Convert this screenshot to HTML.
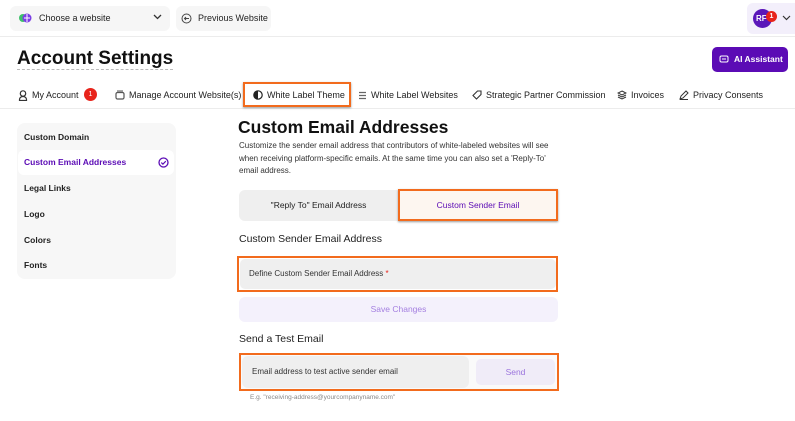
<!DOCTYPE html>
<html><head><style>
*{box-sizing:border-box;margin:0;padding:0}
body{width:795px;height:421px;background:#fff;font-family:"Liberation Sans",sans-serif;color:#111;position:relative;overflow:hidden}
.a{position:absolute}
.tab{position:absolute;top:89px;height:12px;line-height:12px;font-size:9px;color:#222;white-space:nowrap;display:flex;align-items:center;gap:4px}
.tab svg{flex:none}
.side{position:absolute;left:24px;font-size:8.5px;font-weight:bold;color:#222}
</style></head><body>
<div class="a" style="left:0;top:36px;width:795px;height:1px;background:#ececec"></div>
<div class="a" style="left:10px;top:6px;width:160px;height:25px;background:#f6f6f6;border-radius:6px"></div>
<svg class="a" style="left:18px;top:12px" width="14" height="12"><circle cx="5" cy="6" r="4" fill="#3ec16a"/><circle cx="9" cy="6" r="4.5" fill="#7b3fe4"/><path d="M6 6h6M9 2v8" stroke="#fff" stroke-width="1"/></svg>
<div class="a" style="left:39px;top:13px;font-size:9px;color:#222">Choose a website</div>
<svg class="a" style="left:153px;top:14px" width="9" height="7"><path d="M1 1l3.5 3.5L8 1" stroke="#333" fill="none" stroke-width="1.3"/></svg>
<div class="a" style="left:176px;top:6px;width:95px;height:25px;background:#f6f6f6;border-radius:6px"></div>
<svg class="a" style="left:181px;top:13px" width="11" height="11"><circle cx="5.5" cy="5.5" r="4.5" stroke="#444" fill="none"/><path d="M8 5.5H3.5M5 4L3.5 5.5 5 7" stroke="#444" fill="none"/></svg>
<div class="a" style="left:198px;top:13px;font-size:9px;color:#222">Previous Website</div>
<div class="a" style="left:747px;top:3px;width:48px;height:31px;background:#f3effb;border-radius:6px 0 0 6px"></div>
<div class="a" style="left:753px;top:9px;width:19px;height:19px;border-radius:50%;background:#5b17b9;color:#fff;font-size:8px;font-weight:bold;line-height:19px;padding-left:3px">RF</div>
<div class="a" style="left:766px;top:11px;width:11px;height:11px;border-radius:50%;background:#e8241b;color:#fff;font-size:7px;font-weight:bold;line-height:11px;text-align:center">1</div>
<svg class="a" style="left:782px;top:15px" width="9" height="6"><path d="M1 1l3.5 3.5L8 1" stroke="#333" fill="none" stroke-width="1.2"/></svg>
<div class="a" style="left:17px;top:49px;font-size:19px;font-weight:bold;color:#111;border-bottom:1px dashed #bbb;line-height:20px">Account Settings</div>
<div class="a" style="left:712px;top:47px;width:76px;height:25px;background:#5b0bb5;border-radius:5px;color:#fff;font-size:8.5px;font-weight:bold;line-height:25px;padding-left:22px">AI Assistant</div>
<svg class="a" style="left:719px;top:55px" width="10" height="9"><rect x="1" y="1" width="8" height="6" rx="1.5" stroke="#fff" fill="none"/><path d="M3 4h4" stroke="#fff"/></svg>
<div class="a" style="left:0;top:108px;width:795px;height:1px;background:#ececec"></div>
<div class="a" style="left:243px;top:82px;width:108px;height:25px;border:2px solid #f26b1d;box-shadow:0 1px 2px #999"></div>
<div class="tab" style="left:18px"><svg width="10" height="11"><circle cx="5" cy="3.5" r="2.7" stroke="#333" fill="none" stroke-width="1.2"/><path d="M1.5 10.5v-1a3.5 3 0 0 1 7 0v1z" stroke="#333" fill="none" stroke-width="1.2"/></svg>My Account</div>
<div class="a" style="left:84px;top:88px;width:13px;height:13px;border-radius:50%;background:#e8241b;color:#fff;font-size:7px;text-align:center;line-height:13px">1</div>
<div class="tab" style="left:115px"><svg width="10" height="10"><rect x="1" y="2.5" width="8" height="6.5" rx="1.5" stroke="#555" fill="none" stroke-width="1.2"/><path d="M2 1h6" stroke="#555"/></svg>Manage Account Website(s)</div>
<div class="tab" style="left:253px"><svg width="10" height="10"><circle cx="5" cy="5" r="4.2" stroke="#222" stroke-width="1.2" fill="none"/><path d="M5 1a4 4 0 0 0 0 8z" fill="#222"/></svg>White Label Theme</div>
<div class="tab" style="left:358px"><svg width="9" height="9"><path d="M1 1.5h7M1 4.5h7M1 7.5h7" stroke="#666" stroke-width="1.2"/></svg>White Label Websites</div>
<div class="tab" style="left:472px"><svg width="10" height="10"><path d="M5.5 1H9v3.5L4.5 9 1 5.5z" stroke="#333" fill="none" stroke-width="1.1"/></svg>Strategic Partner Commission</div>
<div class="tab" style="left:617px"><svg width="10" height="10"><path d="M5 1L9 3 5 5 1 3zM1 5l4 2 4-2M1 7l4 2 4-2" stroke="#333" fill="none" stroke-width="1"/></svg>Invoices</div>
<div class="tab" style="left:679px"><svg width="10" height="10"><path d="M1 9l1-3 5-5 2 2-5 5zM1 9.5h8" stroke="#333" fill="none" stroke-width="1"/></svg>Privacy Consents</div>
<div class="a" style="left:17px;top:123px;width:159px;height:156px;background:#f7f7f7;border-radius:8px"></div>
<div class="a" style="left:18px;top:150px;width:156px;height:25px;background:#fff;border-radius:6px"></div>
<div class="side" style="top:132px">Custom Domain</div>
<div class="side" style="top:157px;color:#5b0bb5">Custom Email Addresses</div>
<svg class="a" style="left:158px;top:157px" width="11" height="11"><circle cx="5.5" cy="5.5" r="4.5" stroke="#5b0bb5" stroke-width="1.3" fill="none"/><path d="M3.3 5.6l1.6 1.6 2.9-3" stroke="#5b0bb5" stroke-width="1.2" fill="none"/></svg>
<div class="side" style="top:183px">Legal Links</div>
<div class="side" style="top:209px">Logo</div>
<div class="side" style="top:235px">Colors</div>
<div class="side" style="top:260px">Fonts</div>
<div class="a" style="left:238px;top:117px;font-size:17.5px;font-weight:bold;color:#111">Custom Email Addresses</div>
<div class="a" style="left:239px;top:140px;width:320px;font-size:8px;line-height:12.5px;color:#333">Customize the sender email address that contributors of white-labeled websites will see when receiving platform-specific emails. At the same time you can also set a 'Reply-To' email address.</div>
<div class="a" style="left:239px;top:190px;width:319px;height:31px;background:#efefef;border-radius:6px"></div>
<div class="a" style="left:239px;top:200px;width:159px;text-align:center;font-size:8.5px;color:#222">"Reply To" Email Address</div>
<div class="a" style="left:398px;top:189px;width:160px;height:32px;background:#fdf6f0;border:2px solid #f26b1d;box-shadow:0 1px 2px #999;text-align:center;font-size:8.5px;color:#5b0bb5;line-height:28px">Custom Sender Email</div>
<div class="a" style="left:239px;top:233px;font-size:10.5px;color:#222">Custom Sender Email Address</div>
<div class="a" style="left:237px;top:256px;width:321px;height:36px;border:2px solid #f26b1d;background:#fff"></div>
<div class="a" style="left:240px;top:259px;width:316px;height:30px;background:#efefef;border-radius:5px;font-size:8px;color:#333;line-height:30px;padding-left:9px">Define Custom Sender Email Address <span style="color:#e8241b">*</span></div>
<div class="a" style="left:239px;top:297px;width:319px;height:25px;background:#f4f1fc;border-radius:6px;text-align:center;line-height:25px;font-size:8.5px;color:#a47fe0">Save Changes</div>
<div class="a" style="left:239px;top:333px;font-size:10.5px;color:#222">Send a Test Email</div>
<div class="a" style="left:239px;top:353px;width:320px;height:38px;border:2px solid #f26b1d;background:#fafafa"></div>
<div class="a" style="left:242px;top:356px;width:227px;height:32px;background:#efefef;border-radius:6px;font-size:8px;color:#333;line-height:32px;padding-left:10px">Email address to test active sender email</div>
<div class="a" style="left:476px;top:359px;width:79px;height:26px;background:#f0ecf8;border-radius:5px;text-align:center;line-height:26px;font-size:8.5px;color:#9b74dd">Send</div>
<div class="a" style="left:250px;top:394px;font-size:6.5px;color:#888">E.g. "receiving-address@yourcompanyname.com"</div>
</body></html>
